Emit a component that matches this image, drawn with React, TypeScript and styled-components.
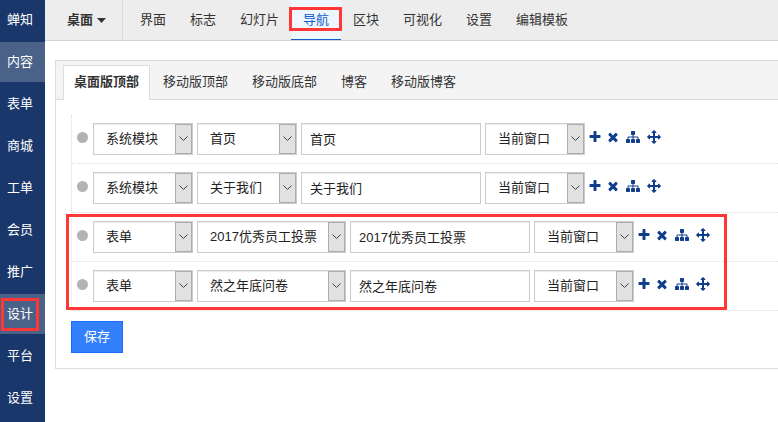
import React from "react";
import styled, { createGlobalStyle, css } from "styled-components";

const GlobalStyle = createGlobalStyle`
  *, *::before, *::after { box-sizing: border-box; }
  body { margin: 0; background: #fff; color: #333; overflow: hidden; }
  body, button, input, select {
    font-family: "Liberation Sans", "Noto Sans CJK SC", sans-serif;
    font-size: 13px;
    line-height: 20px;
  }
  a { color: inherit; text-decoration: none; }
`;

const Page = styled.div`
  display: flex;
  min-height: 100vh;
`;

const Sidebar = styled.nav`
  flex: none;
  width: 45px;
  display: flex;
  flex-direction: column;
  gap: 2px;
  background: #19376a;
`;

const SideLink = styled.a<{ $active?: boolean }>`
  position: relative;
  height: 40px;
  display: flex;
  align-items: center;
  padding-left: 7px;
  color: #fff;
  background: ${(p) => (p.$active ? "#4a6188" : "transparent")};
`;

const marker = css`
  position: absolute;
  border: 3px solid #ff3837;
  pointer-events: none;
`;

const SideMarker = styled.span`
  ${marker}
  inset: 4px 6px 3px 1px;
`;

const NavMarker = styled.span`
  ${marker}
  inset: 7px -1px 9px -2px;
`;

const RowsMarker = styled.span`
  ${marker}
  top: 1px;
  bottom: 1px;
  left: -6px;
  width: 661px;
`;

const Main = styled.main`
  flex: 1;
  min-width: 0;
`;

const TopBar = styled.header`
  height: 41px;
  display: flex;
  background: #ededed;
  border-bottom: 1px solid #d5d5d5;
`;

const DeviceButton = styled.button`
  width: 78px;
  margin: 0 5px 0 0;
  padding: 0 0 0 22px;
  display: flex;
  align-items: center;
  gap: 4px;
  border: 0;
  border-right: 1px solid #d9d9d9;
  background: transparent;
  color: #333;
  font-weight: 700;
`;

const TopNav = styled.nav`
  display: flex;
`;

const TopLink = styled.a<{ $active?: boolean }>`
  position: relative;
  display: flex;
  align-items: center;
  padding: 0 12px;
  white-space: nowrap;
  ${(p) =>
    p.$active &&
    css`
      color: #145ccd;
      background: #eef7ff;
      box-shadow: inset 0 -1px #145ccd;
    `}
`;

const Panel = styled.section`
  margin: 19px 0 0 10px;
  border: 1px solid #ddd;
  border-right: 0;
`;

const Tabs = styled.div`
  height: 39px;
  display: flex;
  align-items: flex-end;
  gap: 2px;
  padding-left: 7px;
  background: #f4f4f4;
  box-shadow: inset 0 -1px #ddd;
`;

const Tab = styled.button<{ $active?: boolean }>`
  height: 35px;
  padding: 0 10px 2px;
  border: 1px solid ${(p) => (p.$active ? "#ddd" : "transparent")};
  border-bottom: 0;
  background: ${(p) => (p.$active ? "#fff" : "transparent")};
  color: #333;
  font-weight: ${(p) => (p.$active ? 700 : 400)};
  white-space: nowrap;
`;

const Form = styled.form`
  padding: 15px 0 15px 15px;
`;

const List = styled.div`
  margin-bottom: 10px;
  border-left: 1px dotted #ddd;
`;

const RowGroup = styled.div`
  position: relative;
`;

const Row = styled.div`
  display: flex;
  gap: 4px;
  padding: 8px 0 8px 5px;
  border-bottom: 1px dotted #ddd;
`;

const Dot = styled.span`
  flex: none;
  width: 11px;
  height: 11px;
  margin: 9px 1px 0 0;
  border-radius: 50%;
  background: #b3b3b3;
`;

const SelectBox = styled.span<{ $wide?: boolean }>`
  position: relative;
  flex: none;
  width: ${(p) => (p.$wide ? 149 : 100)}px;
`;

const field = css`
  display: block;
  width: 100%;
  height: 32px;
  border: 1px solid #ccc;
  border-radius: 0;
  background: #fff;
  box-shadow: inset 0 1px 1px rgba(0, 0, 0, 0.08);
  color: #222;
`;

const Select = styled.select`
  ${field}
  appearance: none;
  padding: 0 20px 0 12px;
`;

const Arrow = styled.span`
  position: absolute;
  top: 1px;
  right: 1px;
  bottom: 1px;
  width: 17px;
  display: grid;
  place-items: center;
  border: 1px solid #adadad;
  background: #e1e1e1;
  pointer-events: none;
`;

const TextInput = styled.input`
  ${field}
  flex: none;
  width: 180px;
  padding: 0 8px 2px;
`;

const Actions = styled.div`
  display: flex;
  align-items: flex-start;
  gap: 4px;
  padding-top: 7px;
`;

const IconButton = styled.button<{ $width: number }>`
  width: ${(p) => p.$width}px;
  height: 14px;
  padding: 0;
  display: flex;
  align-items: center;
  justify-content: center;
  border: 0;
  background: transparent;
  color: #103d8c;

  svg { flex: none; }
`;

const SaveButton = styled.button`
  display: block;
  height: 32px;
  padding: 0 12px;
  border: 1px solid #1a6dff;
  background: #3280fc;
  color: #fff;
`;

const PLUS =
  "M1600 736v192q0 40-28 68t-68 28h-416v416q0 40-28 68t-68 28h-192q-40 0-68-28t-28-68v-416h-416q-40 0-68-28t-28-68v-192q0-40 28-68t68-28h416v-416q0-40 28-68t68-28h192q40 0 68 28t28 68v416h416q40 0 68 28t28 68z";
const TIMES =
  "M1490 1322q0 40-28 68l-136 136q-28 28-68 28t-68-28l-294-294-294 294q-28 28-68 28t-68-28l-136-136q-28-28-28-68t28-68l294-294-294-294q-28-28-28-68t28-68l136-136q28-28 68-28t68 28l294 294 294-294q28-28 68-28t68 28l136 136q28 28 28 68t-28 68l-294 294 294 294q28 28 28 68z";
const SITEMAP =
  "M1792 1248v320q0 40-28 68t-68 28h-320q-40 0-68-28t-28-68v-320q0-40 28-68t68-28h96v-192h-512v192h96q40 0 68 28t28 68v320q0 40-28 68t-68 28h-320q-40 0-68-28t-28-68v-320q0-40 28-68t68-28h96v-192h-512v192h96q40 0 68 28t28 68v320q0 40-28 68t-68 28h-320q-40 0-68-28t-28-68v-320q0-40 28-68t68-28h96v-192q0-52 38-90t90-38h512v-192h-96q-40 0-68-28t-28-68v-320q0-40 28-68t68-28h320q40 0 68 28t28 68v320q0 40-28 68t-68 28h-96v192h512q52 0 90 38t38 90v192h96q40 0 68 28t28 68z";
const MOVE =
  "M1792 896q0 26-19 45l-256 256q-19 19-45 19t-45-19-19-45v-128h-384v384h128q26 0 45 19t19 45-19 45l-256 256q-19 19-45 19t-45-19l-256-256q-19-19-19-45t19-45 45-19h128v-384h-384v128q0 26-19 45t-45 19-45-19l-256-256q-19-19-19-45t19-45l256-256q19-19 45-19t45 19 19 45v128h384v-384h-128q-26 0-45-19t-19-45 19-45l256-256q19-19 45-19t45 19l256 256q19 19 19 45t-19 45-45 19h-128v384h384v-128q0-26 19-45t45-19 45 19l256 256q19 19 19 45z";

const ACTIONS = [
  { label: "添加", path: PLUS, width: 12 },
  { label: "删除", path: TIMES, width: 16 },
  { label: "添加子导航", path: SITEMAP, width: 16 },
  { label: "移动", path: MOVE, width: 18 },
];

function Icon({ path }: { path: string }) {
  return (
    <svg width="14" height="14" viewBox="0 0 1792 1792" fill="currentColor" overflow="visible" aria-hidden="true">
      <path d={path} />
    </svg>
  );
}

function Dropdown({ label, value, wide }: { label: string; value: string; wide?: boolean }) {
  return (
    <SelectBox $wide={wide}>
      <Select aria-label={label} defaultValue={value}>
        <option>{value}</option>
      </Select>
      <Arrow>
        <svg width="9" height="6" viewBox="0 0 9 6" fill="none" stroke="#444" aria-hidden="true">
          <path d="M0.5 0.5 4.5 4.5 8.5 0.5" />
        </svg>
      </Arrow>
    </SelectBox>
  );
}

interface Item {
  type: string;
  target: string;
  wide?: boolean;
}

function NavRow({ type, target, wide }: Item) {
  return (
    <Row>
      <Dot />
      <Dropdown label="类型" value={type} />
      <Dropdown label="链接" value={target} wide={wide} />
      <TextInput aria-label="名称" defaultValue={target} />
      <Dropdown label="打开方式" value="当前窗口" />
      <Actions>
        {ACTIONS.map((a) => (
          <IconButton key={a.label} type="button" aria-label={a.label} $width={a.width}>
            <Icon path={a.path} />
          </IconButton>
        ))}
      </Actions>
    </Row>
  );
}

const SIDE = ["蝉知", "内容", "表单", "商城", "工单", "会员", "推广", "设计", "平台", "设置"];
const TOP = ["界面", "标志", "幻灯片", "导航", "区块", "可视化", "设置", "编辑模板"];
const TABS = ["桌面版顶部", "移动版顶部", "移动版底部", "博客", "移动版博客"];
const MODULES: Item[] = [
  { type: "系统模块", target: "首页" },
  { type: "系统模块", target: "关于我们" },
];
const FORMS: Item[] = [
  { type: "表单", target: "2017优秀员工投票", wide: true },
  { type: "表单", target: "然之年底问卷", wide: true },
];

export default function App() {
  return (
    <Page>
      <GlobalStyle />
      <Sidebar>
        {SIDE.map((name) => (
          <SideLink key={name} href="#" $active={name === "内容" || name === "设计"}>
            {name}
            {name === "设计" && <SideMarker />}
          </SideLink>
        ))}
      </Sidebar>
      <Main>
        <TopBar>
          <DeviceButton type="button">
            桌面
            <svg width="9" height="5" viewBox="0 0 9 5" fill="#333" aria-hidden="true">
              <path d="M0 0h9L4.5 5z" />
            </svg>
          </DeviceButton>
          <TopNav>
            {TOP.map((name) => (
              <TopLink key={name} href="#" $active={name === "导航"}>
                {name}
                {name === "导航" && <NavMarker />}
              </TopLink>
            ))}
          </TopNav>
        </TopBar>
        <Panel>
          <Tabs role="tablist">
            {TABS.map((name, i) => (
              <Tab key={name} type="button" role="tab" aria-selected={i === 0} $active={i === 0}>
                {name}
              </Tab>
            ))}
          </Tabs>
          <Form>
            <List>
              {MODULES.map((item) => (
                <NavRow key={item.target} {...item} />
              ))}
              <RowGroup>
                {FORMS.map((item) => (
                  <NavRow key={item.target} {...item} />
                ))}
                <RowsMarker />
              </RowGroup>
            </List>
            <SaveButton type="button">保存</SaveButton>
          </Form>
        </Panel>
      </Main>
    </Page>
  );
}
